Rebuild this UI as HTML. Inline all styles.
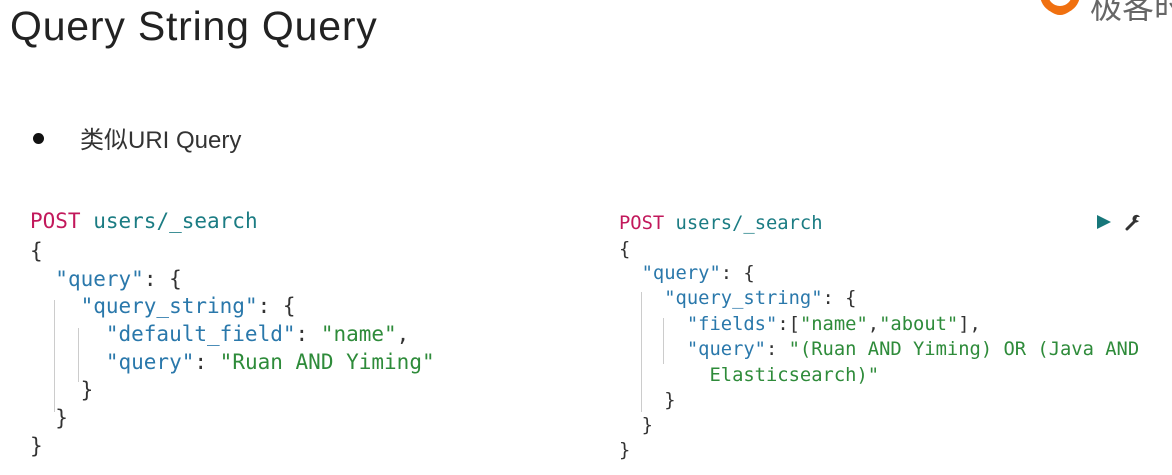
<!DOCTYPE html>
<html><head><meta charset="utf-8"><style>
body{margin:0;width:1172px;height:475px;background:#fff;overflow:hidden;position:relative;font-family:"Liberation Sans","Noto Sans CJK SC",sans-serif}
.t{position:absolute;left:10px;top:3px;font-size:41px;color:#222;letter-spacing:0.8px}
.b{position:absolute;left:33px;top:133px;width:11px;height:11px;border-radius:50%;background:#111}
.bt{position:absolute;left:80px;top:120px;font-size:24px;color:#333}
.c{position:absolute;font-family:"DejaVu Sans Mono","Liberation Mono",monospace;white-space:pre;color:#333}
.l{font-size:21px;left:30px}
.r{font-size:18.8px;left:619px}
.p{color:#c2185b}.u{color:#1b7c83}.k{color:#2a78ab}.s{color:#2e8b3a}
.g{position:absolute;width:1px;background:#ccc}
.logo{position:absolute;left:1040px;top:-14px}
</style></head><body>
<div class="t">Query String Query</div>
<div class="b"></div><div class="bt">类似URI Query</div>
<div class="logo"><svg width="40" height="42" viewBox="0 0 40 42"><path d="M4 8 A16 16 0 0 0 36 8" stroke="#f07010" stroke-width="8" fill="none"/><path d="M12 24 Q20 30 28 24" stroke="#f07010" stroke-width="4" fill="none"/></svg></div>
<div style="position:absolute;left:1090px;top:-18px;font-size:32px;color:#666;white-space:nowrap;font-family:'Noto Sans CJK SC',sans-serif">极客时</div>

<div class="c l" style="top:209px"><span class="p">POST</span> <span class="u">users/_search</span></div>
<div class="c l" style="top:239px">{</div>
<div class="c l" style="top:267px">  <span class="k">"query"</span>: {</div>
<div class="c l" style="top:294px">    <span class="k">"query_string"</span>: {</div>
<div class="c l" style="top:322px">      <span class="k">"default_field"</span>: <span class="s">"name"</span>,</div>
<div class="c l" style="top:350px">      <span class="k">"query"</span>: <span class="s">"Ruan AND Yiming"</span></div>
<div class="c l" style="top:378px">    }</div>
<div class="c l" style="top:406px">  }</div>
<div class="c l" style="top:434px">}</div>
<div class="g" style="left:54px;top:300px;height:112px"></div>
<div class="g" style="left:78px;top:328px;height:54px"></div>

<div class="c r" style="top:213px"><span class="p">POST</span> <span class="u">users/_search</span></div>
<div class="c r" style="top:239px">{</div>
<div class="c r" style="top:263px">  <span class="k">"query"</span>: {</div>
<div class="c r" style="top:288px">    <span class="k">"query_string"</span>: {</div>
<div class="c r" style="top:314px">      <span class="k">"fields"</span>:[<span class="s">"name"</span>,<span class="s">"about"</span>],</div>
<div class="c r" style="top:339px">      <span class="k">"query"</span>: <span class="s">"(Ruan AND Yiming) OR (Java AND</span></div>
<div class="c r" style="top:365px"><span class="s">        Elasticsearch)"</span></div>
<div class="c r" style="top:390px">    }</div>
<div class="c r" style="top:415px">  }</div>
<div class="c r" style="top:440px">}</div>
<div class="g" style="left:641px;top:292px;height:120px"></div>
<div class="g" style="left:663px;top:318px;height:46px"></div>

<svg style="position:absolute;left:1096px;top:214px" width="16" height="16" viewBox="0 0 16 16"><path d="M1 1 L15 8 L1 15Z" fill="#17777a"/></svg>
<svg style="position:absolute;left:1125px;top:213px" width="18" height="18" viewBox="0 0 18 18"><path d="M2 16 L10 8" stroke="#333" stroke-width="3" stroke-linecap="round"/><path d="M9 9 A4 4 0 1 1 15 4 L12 4 L11 7 L14 8 A4 4 0 0 1 9 9Z" fill="#333"/></svg>
</body></html>
